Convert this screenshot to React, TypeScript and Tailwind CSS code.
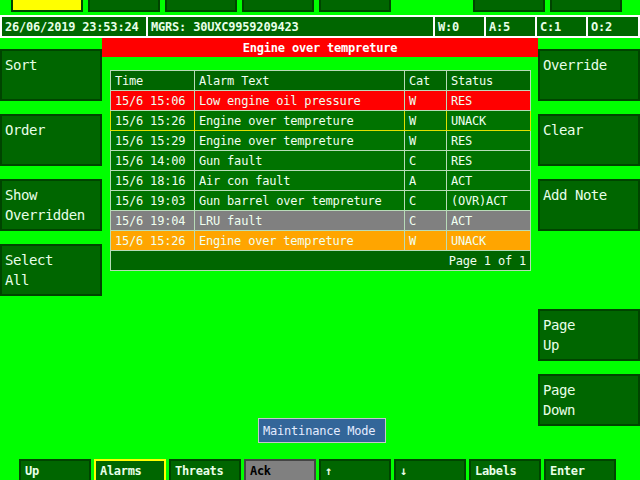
import React from 'react';

const mono = { fontFamily: '"DejaVu Sans Mono", "Liberation Mono", monospace' };

type Row = { time: string; text: string; cat: string; status: string; tone: 'red' | 'green' | 'grey' | 'orange'; hot?: boolean };

const rows: Row[] = [
  { time: '15/6 15:06', text: 'Low engine oil pressure', cat: 'W', status: 'RES', tone: 'red' },
  { time: '15/6 15:26', text: 'Engine over tempreture', cat: 'W', status: 'UNACK', tone: 'green', hot: true },
  { time: '15/6 15:29', text: 'Engine over tempreture', cat: 'W', status: 'RES', tone: 'green' },
  { time: '15/6 14:00', text: 'Gun fault', cat: 'C', status: 'RES', tone: 'green' },
  { time: '15/6 18:16', text: 'Air con fault', cat: 'A', status: 'ACT', tone: 'green' },
  { time: '15/6 19:03', text: 'Gun barrel over tempreture', cat: 'C', status: '(OVR)ACT', tone: 'green' },
  { time: '15/6 19:04', text: 'LRU fault', cat: 'C', status: 'ACT', tone: 'grey' },
  { time: '15/6 15:26', text: 'Engine over tempreture', cat: 'W', status: 'UNACK', tone: 'orange' },
];

const toneBg: Record<Row['tone'], string> = {
  red: 'bg-[#ff0000]',
  green: 'bg-[#007300]',
  grey: 'bg-[#808080]',
  orange: 'bg-[#ffa500]',
};

// side soft key, two lines max
const SideKey: React.FC<{ label?: string[] }> = ({ label }) => {
  if (!label) return <div className="h-[52px] shrink-0" />;
  return (
    <div className="h-[52px] shrink-0 border-2 border-[#004400] bg-[#006600] pl-[3px] pt-[4px] text-[14px] leading-[20px] tracking-[-0.45px] text-[#e8ffe8]">
      {label.map((l) => (
        <div key={l}>{l}</div>
      ))}
    </div>
  );
};

const TopKey: React.FC<{ active?: boolean; hidden?: boolean }> = ({ active, hidden }) => (
  <div
    className={`h-[12px] w-[72px] border-2 border-t-0 ${
      hidden ? 'invisible' : active ? 'border-[#004400] bg-[#ffff00]' : 'border-[#004400] bg-[#006600]'
    }`}
  />
);

const BottomKey: React.FC<{ label: string; selected?: boolean; grey?: boolean }> = ({ label, selected, grey }) => (
  <div
    className={`h-[24px] w-[72px] border-2 pl-[4px] pt-[2px] text-[12px] font-bold leading-[17px] tracking-[-0.3px] ${
      grey
        ? 'border-[#444444] bg-[#808080] text-black'
        : selected
        ? 'border-[#ffff00] bg-[#006600] text-[#e8ffe8]'
        : 'border-[#004400] bg-[#006600] text-[#e8ffe8]'
    }`}
  >
    {label}
  </div>
);

const StatusCell: React.FC<{ w: string; children: React.ReactNode }> = ({ w, children }) => (
  <div className={`${w} flex h-[19px] items-center bg-[#006600] pl-[3px] text-[12px] font-bold tracking-[-0.2px] text-[#e8ffe8]`}>
    {children}
  </div>
);

const cellBorder = 'border border-[#b8dcb8]';

export default function App() {
  return (
    <div className="flex h-[480px] w-[640px] flex-col overflow-hidden bg-[#00ff00]" style={mono}>
      {/* top soft keys */}
      <div className="flex shrink-0 gap-[5px] pl-[11px]">
        <TopKey active />
        <TopKey />
        <TopKey />
        <TopKey />
        <TopKey />
        <TopKey hidden />
        <TopKey />
        <TopKey />
      </div>

      {/* status bar */}
      <div className="mt-[3px] flex shrink-0 gap-[2px] bg-white p-[2px]">
        <StatusCell w="w-[144px]">26/06/2019 23:53:24</StatusCell>
        <StatusCell w="w-[285px]">MGRS: 30UXC9959209423</StatusCell>
        <StatusCell w="w-[49px]">W:0</StatusCell>
        <StatusCell w="w-[49px]">A:5</StatusCell>
        <StatusCell w="w-[49px]">C:1</StatusCell>
        <StatusCell w="flex-1">O:2</StatusCell>
      </div>

      {/* main */}
      <div className="flex h-[421px] shrink-0">
        <div className="flex w-[102px] flex-col gap-[13px] pt-[11px]">
          <SideKey label={['Sort']} />
          <SideKey label={['Order']} />
          <SideKey label={['Show', 'Overridden']} />
          <SideKey label={['Select', 'All']} />
        </div>

        <div className="flex w-[436px] flex-col">
          <div className="flex h-[19px] w-full shrink-0 items-center justify-center bg-[#ff0000] text-[12px] font-bold tracking-[-0.2px] text-white">
            Engine over tempreture
          </div>

          <table className="mx-[8px] mt-[13px] w-[420px] table-fixed border-collapse text-[12px] tracking-[-0.2px] text-[#f0fff0]">
            <colgroup>
              <col className="w-[84px]" />
              <col className="w-[210px]" />
              <col className="w-[42px]" />
              <col className="w-[84px]" />
            </colgroup>
            <thead>
              <tr className="h-[20px] bg-[#006600]">
                <th className={`${cellBorder} pl-[4px] text-left font-normal`}>Time</th>
                <th className={`${cellBorder} pl-[4px] text-left font-normal`}>Alarm Text</th>
                <th className={`${cellBorder} pl-[4px] text-left font-normal`}>Cat</th>
                <th className={`${cellBorder} pl-[4px] text-left font-normal`}>Status</th>
              </tr>
            </thead>
            <tbody>
              {rows.map((r, i) => {
                const b = r.hot ? 'border border-[#e0e000]' : cellBorder;
                return (
                  <tr key={i} className={`h-[20px] ${toneBg[r.tone]}`}>
                    <td className={`${b} whitespace-nowrap pl-[4px]`}>{r.time}</td>
                    <td className={`${b} whitespace-nowrap pl-[4px]`}>{r.text}</td>
                    <td className={`${b} pl-[4px]`}>{r.cat}</td>
                    <td className={`${b} whitespace-nowrap pl-[4px]`}>{r.status}</td>
                  </tr>
                );
              })}
              <tr className="h-[20px] bg-[#006600]">
                <td colSpan={4} className={`${cellBorder} pr-[4px] text-right`}>
                  Page 1 of 1
                </td>
              </tr>
            </tbody>
          </table>

          <div className="ml-[156px] mt-[147px] flex h-[25px] w-[128px] shrink-0 items-center border border-[#c8c8c8] bg-[#336699] pl-[4px] text-[12px] tracking-[-0.2px] text-[#e4ecff]">
            Maintinance Mode
          </div>
        </div>

        <div className="flex flex-1 flex-col gap-[13px] pt-[11px]">
          <SideKey label={['Override']} />
          <SideKey label={['Clear']} />
          <SideKey label={['Add Note']} />
          <SideKey />
          <SideKey label={['Page', 'Up']} />
          <SideKey label={['Page', 'Down']} />
        </div>
      </div>

      {/* bottom soft keys */}
      <div className="flex shrink-0 gap-[3px] pl-[19px]">
        <BottomKey label="Up" />
        <BottomKey label="Alarms" selected />
        <BottomKey label="Threats" />
        <BottomKey label="Ack" grey />
        <BottomKey label="↑" />
        <BottomKey label="↓" />
        <BottomKey label="Labels" />
        <BottomKey label="Enter" />
      </div>
    </div>
  );
}
